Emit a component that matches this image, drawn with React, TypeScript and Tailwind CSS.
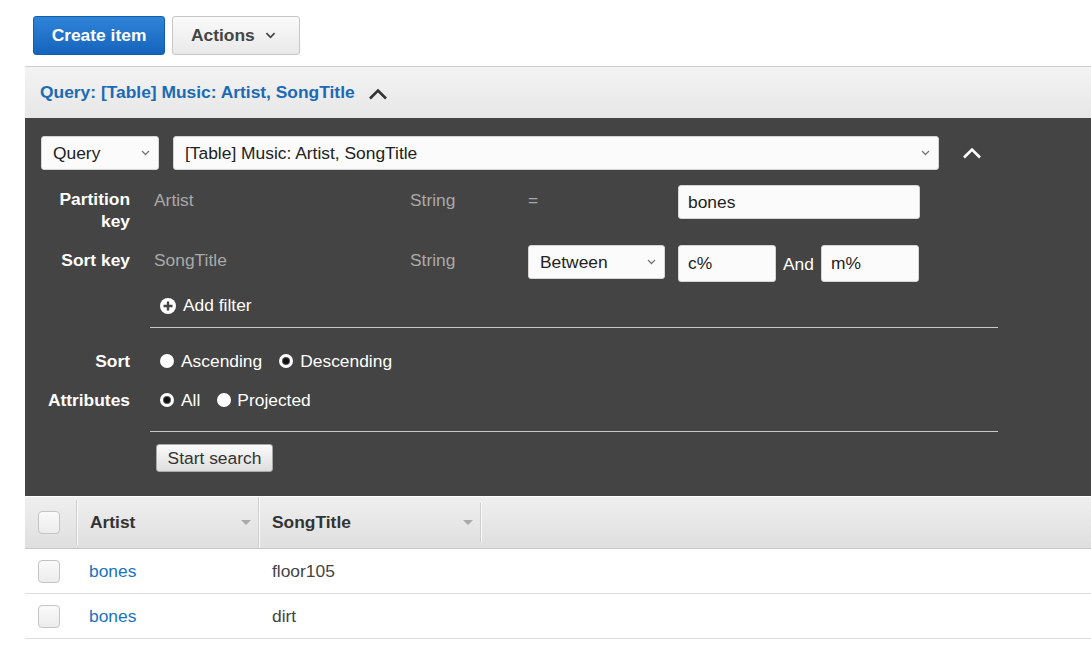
import React from "react";

const ChevronUp = ({ className, color }: { className?: string; color: string }) => (
  <svg className={className} width="20" height="12" viewBox="0 0 20 12" fill="none">
    <path d="M2 10.5 L10 2.5 L18 10.5" stroke={color} strokeWidth="2.6" />
  </svg>
);

const SmallChevron = ({ color = "#777", big }: { color?: string; big?: boolean }) => (
  <svg width={big ? 11 : 9} height={big ? 7 : 6} viewBox="0 0 9 6" fill="none">
    <path d="M1 1 L4.5 4.5 L8 1" stroke={color} strokeWidth={big ? 1.5 : 1.3} />
  </svg>
);

const Select = ({ label, className }: { label: string; className: string }) => (
  <div
    className={`flex items-center justify-between rounded-[3px] border border-[#d5d5d5] bg-[#fbfbfb] pl-[11px] pr-[8px] text-[17.4px] text-[#222] ${className}`}
  >
    <span>{label}</span>
    <SmallChevron />
  </div>
);

const Input = ({ value, className }: { value: string; className: string }) => (
  <div
    className={`flex items-center rounded-[3px] border border-[#d5d5d5] bg-[#fbfbfb] pl-[9px] text-[17.4px] text-[#222] ${className}`}
  >
    {value}
  </div>
);

const Radio = ({ checked }: { checked?: boolean }) => (
  <span className="flex h-[14px] w-[14px] items-center justify-center rounded-full bg-white">
    {checked && <span className="h-[6px] w-[6px] rounded-full bg-[#111] ring-1 ring-[#555]" />}
  </span>
);

const Checkbox = () => (
  <div className="h-[23px] w-[22px] rounded-[4px] border border-[#c4c4c4] bg-gradient-to-b from-[#fafafa] to-[#ececec]" />
);

const SortArrow = () => (
  <svg width="10" height="6" viewBox="0 0 10 6">
    <path d="M0 0 L10 0 L5 5 Z" fill="#aaa" />
  </svg>
);

const rows = [
  { artist: "bones", title: "floor105" },
  { artist: "bones", title: "dirt" },
];

export default function App() {
  return (
    <div className="min-h-[655px] bg-white pt-[16px] font-['Liberation_Sans',Arial,sans-serif] text-[17.4px]">
      {/* Toolbar */}
      <div className="flex gap-[7px] pl-[33px]">
        <button className="h-[39px] w-[132px] rounded-[3px] border border-[#1060b0] bg-gradient-to-b from-[#2f84d8] to-[#1464bb] text-[17.4px] font-bold text-white">
          Create item
        </button>
        <button className="flex h-[39px] w-[128px] items-center gap-[10px] rounded-[3px] border border-[#c6c6c6] bg-gradient-to-b from-[#fafafa] to-[#e9e9e9] pl-[18px] text-[17.4px] font-bold text-[#444]">
          Actions
          <SmallChevron color="#444" big />
        </button>
      </div>

      <div className="ml-[25px] mt-[11px]">
        {/* Query header */}
        <div className="flex h-[52px] items-center border-t border-[#cfcfcf] bg-gradient-to-b from-[#f3f3f3] to-[#e7e7e7] pl-[15px]">
          <span className="font-bold text-[#1b6ab5]">Query: [Table] Music: Artist, SongTitle</span>
          <ChevronUp className="ml-[13px] mt-[3px]" color="#333" />
        </div>

        {/* Query panel */}
        <div className="bg-[#444444] pb-[24px] pt-[18px]">
          <div className="flex items-center pl-[16px]">
            <Select label="Query" className="h-[34px] w-[118px]" />
            <Select label="[Table] Music: Artist, SongTitle" className="ml-[14px] h-[34px] w-[766px]" />
            <ChevronUp className="ml-[23px]" color="#fff" />
          </div>

          <div className="mt-[15px] flex items-start pl-[16px]">
            <div className="w-[89px] pt-[3px] text-right font-bold leading-[22px] text-white">
              Partition
              <br />
              key
            </div>
            <div className="ml-[24px] w-[256px] pt-[4px] leading-[22px] text-[#a9a9a9]">Artist</div>
            <div className="w-[118px] pt-[4px] leading-[22px] text-[#a9a9a9]">String</div>
            <div className="w-[150px] pt-[4px] leading-[22px] text-[#a9a9a9]">=</div>
            <Input value="bones" className="h-[34px] w-[242px]" />
          </div>

          <div className="mt-[13px] flex items-start pl-[16px]">
            <div className="w-[89px] pt-[4px] text-right font-bold leading-[22px] text-white">Sort key</div>
            <div className="ml-[24px] w-[256px] pt-[4px] leading-[22px] text-[#a9a9a9]">SongTitle</div>
            <div className="w-[118px] pt-[4px] leading-[22px] text-[#a9a9a9]">String</div>
            <Select label="Between" className="h-[34px] w-[137px]" />
            <Input value="c%" className="ml-[13px] h-[37px] w-[98px]" />
            <span className="ml-[7px] pt-[8px] leading-[22px] text-white">And</span>
            <Input value="m%" className="ml-[7px] h-[37px] w-[98px]" />
          </div>

          <div className="mt-[11px] flex h-[24px] items-center pl-[135px] pt-[1px] text-white">
            <svg width="16" height="16" viewBox="0 0 16 16">
              <circle cx="8" cy="8" r="8" fill="#fff" />
              <path d="M8 3.5 V12.5 M3.5 8 H12.5" stroke="#444" strokeWidth="2.4" />
            </svg>
            <span className="ml-[7px]">Add filter</span>
          </div>

          <div className="ml-[125px] mt-[10px] w-[848px] border-t border-[#c8c8c8]" />

          <div className="mt-[21px] flex h-[24px] items-center pl-[16px] text-white">
            <div className="w-[89px] text-right font-bold">Sort</div>
            <div className="ml-[30px] flex items-center gap-[7px]">
              <Radio />
              <span>Ascending</span>
            </div>
            <div className="ml-[17px] flex items-center gap-[7px]">
              <Radio checked />
              <span>Descending</span>
            </div>
          </div>

          <div className="mt-[15px] flex h-[24px] items-center pl-[16px] text-white">
            <div className="w-[89px] text-right font-bold">Attributes</div>
            <div className="ml-[30px] flex items-center gap-[7px]">
              <Radio checked />
              <span>All</span>
            </div>
            <div className="ml-[17px] flex items-center gap-[6px]">
              <Radio />
              <span>Projected</span>
            </div>
          </div>

          <div className="ml-[125px] mt-[19px] w-[848px] border-t border-[#c8c8c8]" />

          <div className="ml-[131px] mt-[12px]">
            <button className="h-[28px] w-[117px] rounded-[3px] border border-[#a8a8a8] bg-gradient-to-b from-[#fbfbfb] to-[#dedede] text-[17.4px] text-[#333]">
              Start search
            </button>
          </div>
        </div>

        {/* Results table */}
        <div className="mt-[1px] flex h-[52px] items-stretch border-b border-[#c6c6c6] bg-gradient-to-b from-[#efefef] to-[#dfdfdf]">
          <div className="flex w-[51px] items-center pl-[13px]">
            <Checkbox />
          </div>
          <div className="my-[3px] border-l border-[#cfcfcf] shadow-[1px_0_0_#fafafa]" />
          <div className="flex w-[181px] items-center justify-between pl-[13px] pr-[7px] font-bold text-[#333]">
            Artist
            <SortArrow />
          </div>
          <div className="border-l border-[#cfcfcf] shadow-[1px_0_0_#fafafa]" />
          <div className="flex w-[221px] items-center justify-between pl-[13px] pr-[7px] font-bold text-[#333]">
            SongTitle
            <SortArrow />
          </div>
          <div className="my-[6px] border-l border-[#cfcfcf] shadow-[1px_0_0_#fafafa]" />
        </div>

        {rows.map((r, i) => (
          <div key={i} className="flex h-[45px] items-center border-b border-[#dddddd]">
            <div className="w-[64px] pl-[13px]">
              <Checkbox />
            </div>
            <div className="w-[183px] text-[#1a73c0]">{r.artist}</div>
            <div className="text-[#444]">{r.title}</div>
          </div>
        ))}
      </div>
    </div>
  );
}
